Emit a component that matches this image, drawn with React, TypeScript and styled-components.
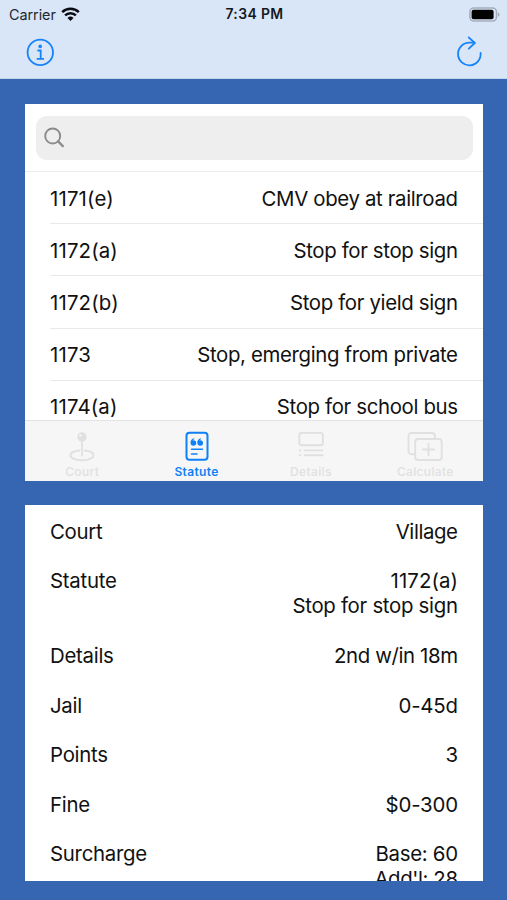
import React from "react";
import styled, { createGlobalStyle } from "styled-components";

const GlobalStyle = createGlobalStyle`
  * { box-sizing: border-box; }
  body { margin: 0; background: #3666b1; }
`;

const Screen = styled.div`
  width: 507px;
  height: 900px;
  display: flex;
  flex-direction: column;
  overflow: hidden;
  background: #3666b1;
  color: #111;
  font-family: Inter, "Liberation Sans", sans-serif;
`;

const Header = styled.header`
  height: 79px;
  background: #d9e6f7;
  border-bottom: 1px solid #c3d3ea;
  flex: none;
`;

const StatusBar = styled.div`
  height: 27px;
  display: grid;
  grid-template-columns: 1fr auto 1fr;
  align-items: center;
  padding: 0 7px 0 9px;
`;

const Carrier = styled.div`
  display: flex;
  align-items: center;
  gap: 5px;
  font-size: 14.4px;
  line-height: 27px;
  letter-spacing: -0.05px;
  color: #22282f;
`;

const Clock = styled.div`
  font-size: 13.9px;
  font-weight: 600;
  line-height: 27px;
  padding-top: 1px;
  letter-spacing: 0.4px;
  color: #14181d;
`;

const Battery = styled.div`
  display: flex;
  justify-content: flex-end;
`;

const NavBar = styled.nav`
  height: 51px;
  display: flex;
  justify-content: space-between;
  padding: 9px 24px 0 26px;
`;

const IconButton = styled.button`
  width: 28px;
  height: 32px;
  padding: 0;
  border: 0;
  background: none;
  color: #1683f8;
  svg { display: block; }
`;

const Content = styled.main`
  display: flex;
  flex-direction: column;
  gap: 24px;
  padding: 25px 24.5px 0 25px;
`;

const Card = styled.section`
  height: 376.7px;
  flex: none;
  background: #fff;
  overflow: hidden;
  display: flex;
  flex-direction: column;
`;

const SearchArea = styled.div`
  height: 68px;
  flex: none;
  padding: 12px 10px 0 10.5px;
  border-bottom: 1px solid #ebebec;
`;

const SearchBox = styled.label`
  height: 43.5px;
  display: flex;
  align-items: center;
  padding-left: 8px;
  border-radius: 11px;
  background: #eee;
`;

const StatuteList = styled.div`
  flex: 1;
  min-height: 0;
  overflow: hidden;
  padding-left: 25px;
`;

const StatuteRow = styled.div`
  height: 52.2px;
  display: flex;
  justify-content: space-between;
  align-items: center;
  padding: 3px 24.5px 0 0;
  border-bottom: 1px solid #e9e9ea;
`;

const Label = styled.span<{ $spacing?: number }>`
  font-size: 20.4px;
  line-height: 24.9px;
  letter-spacing: ${({ $spacing = -0.2 }) => $spacing}px;
  margin-right: ${({ $spacing = -0.2 }) => $spacing * -1}px;
  white-space: nowrap;
`;

const TabBar = styled.nav`
  height: 60.7px;
  flex: none;
  display: grid;
  grid-template-columns: repeat(4, 1fr);
  background: #f7f6f7;
  border-top: 1px solid #e2e2e3;
`;

const Tab = styled.div<{ $active?: boolean }>`
  display: flex;
  flex-direction: column;
  align-items: center;
  padding-top: 9px;
  color: ${({ $active }) => ($active ? "#0f80f5" : "#e0e0e1")};
  font-size: 12px;
  font-weight: ${({ $active }) => ($active ? 600 : 500)};
  line-height: 14px;
  letter-spacing: 0.35px;
  svg { display: block; margin-bottom: 1px; }
`;

const Summary = styled.dl`
  margin: 0;
  padding: 15.2px 24.5px 0 25px;
  display: flex;
  flex-direction: column;
  gap: 24.7px;
`;

const SummaryRow = styled.div`
  display: flex;
  justify-content: space-between;
`;

const Term = styled.dt`
  display: flex;
  align-items: flex-start;
`;

const Value = styled.dd`
  margin: 0;
  display: flex;
  flex-direction: column;
  align-items: flex-end;
`;

const WifiIcon = () => (
  <svg width="19" height="15" viewBox="0 0 19 15" fill="none" stroke="#090c10" strokeWidth="2.5">
    <path d="M1.2 5.2a12 12 0 0 1 16.6 0" />
    <path d="M4.1 8.400a7.800 7.800 0 0 1 10.800 0" />
    <path d="M9.500 14 6.500 10.900a4.300 4.300 0 0 1 6 0z" fill="#090c10" stroke="none" />
  </svg>
);

const BatteryIcon = () => (
  <svg width="31" height="15" viewBox="0 0 31 15">
    <rect x="0.9" y="0.9" width="26.6" height="13.2" rx="4" fill="none" stroke="#a4adba" strokeWidth="1.5" />
    <rect x="2.6" y="2.7" width="22" height="9.6" rx="2" fill="#020202" />
    <path d="M28.8 5.2v4.6q1.8-.7 1.8-2.3t-1.8-2.3z" fill="#a4adba" />
  </svg>
);

const InfoIcon = () => (
  <svg width="28" height="32" viewBox="0 0 28 32" fill="none" stroke="currentColor">
    <circle cx="14.3" cy="16.4" r="12.7" strokeWidth="1.8" />
    <circle cx="14.2" cy="10.4" r="1.8" fill="currentColor" stroke="none" />
    <path d="M11.4 14.5h3.3v8.3M10.7 22.9h7.3" strokeWidth="1.8" />
  </svg>
);

const RefreshIcon = () => (
  <svg width="28" height="32" viewBox="0 0 28 32" fill="none" stroke="currentColor" strokeWidth="1.8" strokeLinecap="round" strokeLinejoin="round">
    <path d="M25.6 16.900A11.300 11.300 0 1 1 14.300 6.700h5.300" />
    <path d="m13.700 1.400 6.100 5.600-6 5.600" />
  </svg>
);

const SearchIcon = () => (
  <svg width="22" height="22" viewBox="0 0 22 22" fill="none" stroke="#8b8b8d" strokeLinecap="round">
    <circle cx="8.700" cy="9" r="7.500" strokeWidth="1.900" />
    <path d="m14.200 14.400 4.600 4.700" strokeWidth="2.300" />
  </svg>
);

const CourtIcon = () => (
  <svg width="38" height="34" viewBox="0 0 38 34" fill="none" stroke="currentColor">
    <path d="M17.2 20.5c-5.6.1-9.7 2-9.7 4.7 0 2.9 5.1 5 11.5 5s11.5-2.1 11.5-5c0-2.7-4.1-4.6-9.700-4.700" strokeWidth="1.9" />
    <path d="M19 11v14.5" strokeWidth="1.8" strokeLinecap="round" />
    <circle cx="19" cy="7" r="4.7" fill="currentColor" stroke="none" />
    <circle cx="17.5" cy="5.6" r="1.4" fill="#f1f1f2" stroke="none" />
  </svg>
);

const StatuteIcon = () => (
  <svg width="38" height="34" viewBox="0 0 38 34" fill="none" stroke="currentColor">
    <rect x="8.5" y="2.8" width="21" height="27" rx="3" strokeWidth="2" />
    <g fill="currentColor" stroke="none">
      <circle cx="15.4" cy="13" r="2.8" />
      <circle cx="22.2" cy="13" r="2.8" />
      <path d="M12.6 13c-.1-3 1.300-4.500 3.500-4.800l.2 1c-1.200.4-1.700 1.100-1.800 2zM19.400 13c-.1-3 1.300-4.500 3.500-4.800l.2 1c-1.200.4-1.700 1.100-1.800 2z" />
    </g>
    <path d="M13.5 19.3h11M13.5 24h5.5" strokeWidth="1.5" strokeLinecap="round" />
  </svg>
);

const DetailsIcon = () => (
  <svg width="38" height="34" viewBox="0 0 38 34" fill="none" stroke="currentColor" strokeWidth="1.9">
    <rect x="7.3" y="2.9" width="23.6" height="12.4" rx="2.5" />
    <path d="M12.6 20.4h18M12.6 25.3h18" strokeLinecap="round" />
    <path d="M6.9 20.4h2.2M6.9 25.3h2.2" strokeWidth="2" />
  </svg>
);

const CalculateIcon = () => (
  <svg width="38" height="34" viewBox="0 0 38 34" fill="none" stroke="currentColor" strokeWidth="1.9">
    <path d="M9 24.3H5.500a3 3 0 0 1-3-3V6a3 3 0 0 1 3-3h20.400a3 3 0 0 1 3 3v3" />
    <rect x="9.2" y="9" width="26.500" height="21" rx="3" />
    <path d="M22.500 13.800v11.400M16.800 19.500h11.400" strokeLinecap="round" />
  </svg>
);

const statutes = [
  { code: "1171(e)", name: "CMV obey at railroad" },
  { code: "1172(a)", name: "Stop for stop sign" },
  { code: "1172(b)", name: "Stop for yield sign" },
  { code: "1173", name: "Stop, emerging from private" },
  { code: "1174(a)", name: "Stop for school bus" },
];

const summary = [
  { term: "Court", values: [{ text: "Village", spacing: -0.4 }] },
  { term: "Statute", values: [{ text: "1172(a)", spacing: 0.1 }, { text: "Stop for stop sign", spacing: -0.29 }] },
  { term: "Details", values: [{ text: "2nd w/in 18m", spacing: -0.38 }] },
  { term: "Jail", values: [{ text: "0-45d", spacing: -0.2 }] },
  { term: "Points", values: [{ text: "3", spacing: -0.2 }] },
  { term: "Fine", values: [{ text: "$0-300", spacing: -0.2 }] },
  { term: "Surcharge", values: [{ text: "Base: 60", spacing: -0.3 }, { text: "Add'l: 28", spacing: -0.4 }] },
];

const tabs = [
  { name: "Court", Icon: CourtIcon },
  { name: "Statute", Icon: StatuteIcon },
  { name: "Details", Icon: DetailsIcon },
  { name: "Calculate", Icon: CalculateIcon },
];

export default function App() {
  return (
    <Screen>
      <GlobalStyle />
      <Header>
        <StatusBar>
          <Carrier>Carrier <WifiIcon /></Carrier>
          <Clock>7:34 PM</Clock>
          <Battery><BatteryIcon /></Battery>
        </StatusBar>
        <NavBar>
          <IconButton aria-label="Info"><InfoIcon /></IconButton>
          <IconButton aria-label="Refresh"><RefreshIcon /></IconButton>
        </NavBar>
      </Header>
      <Content>
        <Card>
          <SearchArea>
            <SearchBox aria-label="Search"><SearchIcon /></SearchBox>
          </SearchArea>
          <StatuteList>
            {statutes.map(({ code, name }) => (
              <StatuteRow key={code}>
                <Label $spacing={0.15}>{code}</Label>
                <Label $spacing={-0.35}>{name}</Label>
              </StatuteRow>
            ))}
          </StatuteList>
          <TabBar>
            {tabs.map(({ name, Icon }) => (
              <Tab key={name} $active={name === "Statute"}>
                <Icon />
                {name}
              </Tab>
            ))}
          </TabBar>
        </Card>
        <Card>
          <Summary>
            {summary.map(({ term, values }) => (
              <SummaryRow key={term}>
                <Term><Label $spacing={-0.27}>{term}</Label></Term>
                <Value>
                  {values.map(({ text, spacing }) => (
                    <Label key={text} $spacing={spacing}>{text}</Label>
                  ))}
                </Value>
              </SummaryRow>
            ))}
          </Summary>
        </Card>
      </Content>
    </Screen>
  );
}
